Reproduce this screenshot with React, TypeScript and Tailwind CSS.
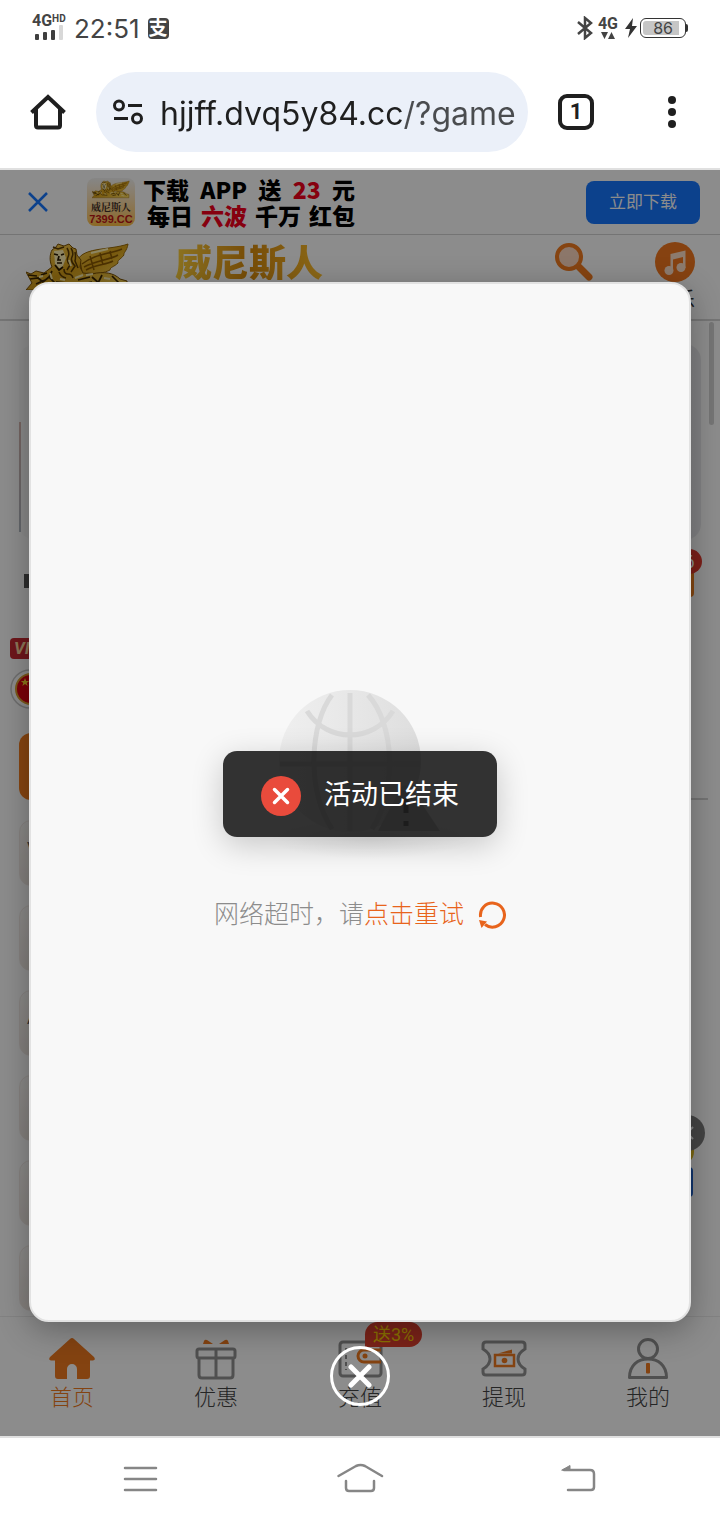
import { useState } from 'react';
import type { ReactNode } from 'react';

const FONT = 'font-[Roboto,"Noto_Sans_CJK_SC",sans-serif]';

const GAME_ROWS = ['V', '', 'A', '', '', ''];

function StatusBar() {
  return (
    <div className="flex h-14 items-center justify-between px-8 text-[#444]">
      <div className="flex items-center">
        <div className="flex w-[34px] flex-col">
          <div className="flex items-start leading-3 font-bold">
            <span className="text-[16px]">4G</span>
            <span className="text-[10px] leading-[8px]">HD</span>
          </div>
          <svg className="h-[14px] w-[34px] overflow-visible" viewBox="0 0 34 14" fill="#3f3f3f">
            <rect x="3" y="7" width="4" height="6" rx="1" />
            <rect x="11" y="5" width="4" height="8" rx="1" />
            <rect x="19" y="3" width="4" height="10" rx="1" />
            <rect x="27" y="-2" width="4" height="15" rx="1" fill="#d8d8d8" />
          </svg>
        </div>
        <span className="ml-2 pt-[2px] font-[Inter,sans-serif] text-[26px] leading-8">22:51</span>
        <span className="ml-2 flex h-[21px] w-[21px] items-center justify-center overflow-hidden rounded bg-[#444] text-[19px] leading-none font-bold text-white">
          支
        </span>
      </div>

      <div className="flex items-center">
        <svg className="h-6 w-4" viewBox="0 0 16 24" fill="none" stroke="#444" strokeWidth="2.500">
          <path d="M1 6l13 11-6 5V2l6 5L1 18" />
        </svg>
        <div className="ml-[5px] flex flex-col items-center">
          <span className="text-[16px] leading-[14px] font-bold">4G</span>
          <svg className="h-[8px] w-[14px]" viewBox="0 0 14 8" fill="#444">
            <path d="M0 1h7l-3.500 7zM7 8h7l-3.500-7z" />
          </svg>
        </div>
        <svg className="ml-[7px] h-5 w-3" viewBox="0 0 12 20" fill="#333">
          <path d="M8 0L0 11h5l-2 9 9-12H7z" />
        </svg>
        <div className="ml-[3px] flex h-5 w-[46px] items-center rounded-[6px] border border-[#333] p-[2px]">
          <div className="flex h-full w-9 items-center justify-end rounded-l-[3px] bg-[#c6c6c6] pr-[6px] font-[Inter,sans-serif] text-[16px] leading-none">
            86
          </div>
        </div>
        <div className="h-2 w-[2px] rounded-r bg-[#333]" />
      </div>
    </div>
  );
}

function BrowserBar() {
  return (
    <div className="flex h-[114px] items-center gap-[30px] border-b-2 border-[#e0e0e0] pl-[30px] text-[#1f1f1f]">
      <button aria-label="Home">
        <svg className="h-9 w-9" viewBox="0 0 36 36" fill="none" stroke="currentColor" strokeWidth="4">
          <path d="M1.500 18.500L18 3l16.500 15.500" />
          <path d="M6 15v16.500a2 2 0 0 0 2 2h20a2 2 0 0 0 2-2V15" />
        </svg>
      </button>
      <div className="flex h-20 min-w-0 flex-1 items-center rounded-full bg-[#ebf0f9] pl-4">
        <svg className="h-8 w-8 shrink-0" viewBox="0 0 32 32" fill="none" stroke="currentColor" strokeWidth="3">
          <circle cx="7" cy="9.500" r="4.500" />
          <path d="M16 9.500h14M2 22.500h14" />
          <circle cx="25" cy="22.500" r="4.500" />
        </svg>
        <input
          aria-label="Address"
          defaultValue="hjjff.dvq5y84.cc/?game"
          className="ml-4 min-w-0 flex-1 bg-[linear-gradient(90deg,#1f1f1f_244px,#4a4c4f_244px)] bg-clip-text pt-1 font-[Inter,sans-serif] text-[32px] leading-10 text-transparent outline-none"
        />
      </div>
      <button className="flex h-9 w-9 items-center justify-center rounded-[9px] border-4 border-[#1f1f1f] text-[22px] leading-none font-bold">
        1
      </button>
      <button aria-label="Menu" className="flex w-24 flex-col items-center gap-1">
        <span className="h-2 w-2 rounded-full bg-[#1f1f1f]" />
        <span className="h-2 w-2 rounded-full bg-[#1f1f1f]" />
        <span className="h-2 w-2 rounded-full bg-[#1f1f1f]" />
      </button>
    </div>
  );
}

function Lion({ className }: { className: string }) {
  return (
    <svg className={className} viewBox="0 0 104 48" fill="none">
      <defs>
        <linearGradient id="gold" x1="0" y1="0" x2="1" y2="1">
          <stop offset="0" stopColor="#ffd65c" />
          <stop offset="0.500" stopColor="#dba31a" />
          <stop offset="1" stopColor="#ffdc5c" />
        </linearGradient>
      </defs>
      <path
        d="M50 22C54 4 82 9 102 2C101 9 97 11 98 13C94 18 91 18 92 21C88 25 84 25 84 28C78 31 72 32 62 31L52 34z"
        fill="url(#gold)"
        stroke="#9a6a08"
        strokeWidth="1"
      />
      <path d="M56 22C68 12 84 12 96 7M58 25C70 18 84 18 92 13M60 28C70 22 80 23 87 19M54 19l2 12M64 14l4 14M74 11l3 12M84 9l2 8" stroke="#8a5a04" strokeWidth="1.500" />
      <path
        d="M0 30l5 2 5-3 8 2 8-6c-3-7-2-13 0-17l4-3 2-3 6 2 5-2 4 4 3 1 1 6 4 5-1 7 3 6 9 1c12-3 22-1 28 5l7 2v9H0l6-7z"
        fill="url(#gold)"
        stroke="#7c5206"
        strokeWidth="1"
      />
      <path d="M28 9l9-1 3 8-3 8-3 3-5-5z" fill="#fff0b4" />
      <path d="M28 12l4 1M35 13l3-1M33 14l-1 4h3M31 21h5M29 23l4 5 4-3" stroke="#2b1a00" strokeWidth="1.700" />
      <path d="M41 6q3 5 1 9t2 8l-3 5M45 6q3 5 1 9t3 9l-4 6M49 10q1 5 0 9l3 7M38 27q0 5 4 5t5 4M33 30q2 5 7 6M27 5l5 2 6-2" stroke="#5c3c04" strokeWidth="1.500" />
      <path d="M4 37l8-1 5 4 6-5M10 42l9-4M26 29l-3 6 6 6M52 38l12-3M66 35l8 7M76 33l-4 8M86 34l8 8M30 40l12 1M56 42l10-2M2 33l9 1M15 33l6-2" stroke="#3b2500" strokeWidth="1.700" />
      <path d="M34 37l5 1M49 36l8-3M60 33l7-1M78 36l6 1M13 35l4-1M43 18l2 6M65 11l17-4M80 41l8 2M24 31l2 6" stroke="#fff3b4" strokeWidth="2" />
    </svg>
  );
}

function DownloadBar() {
  return (
    <div className="flex h-[65px] shrink-0 items-center border-b border-[#d4d4d4] pr-5 pl-7">
      <button aria-label="关闭">
        <svg className="h-5 w-5" viewBox="0 0 20 20" stroke="#1677ff" strokeWidth="2.500">
          <path d="M1 1l18 18M19 1L1 19" />
        </svg>
      </button>
      <div className="ml-[39px] flex h-12 w-12 flex-col items-center overflow-hidden rounded-lg bg-linear-to-b from-[#f4f4f4] to-[#ffc043]">
        <Lion className="h-[22px] w-[38px] shrink-0" />
        <span className="font-['Noto_Serif_CJK_SC','Noto_Sans_CJK_SC',serif] text-[10px] leading-[13px] font-bold text-[#43302a]">威尼斯人</span>
        <span className="font-['Liberation_Sans',sans-serif] text-[11px] leading-[13px] font-bold text-[#c01515]">7399.CC</span>
      </div>
      <div className="ml-2 w-[212px] font-['Noto_Sans_CJK_SC',sans-serif] text-[23px] leading-[26px] font-black text-black">
        <div className="flex justify-between">
          <span>下载</span>
          <span>APP</span>
          <span>送</span>
          <span className="text-[#f5001d]">23</span>
          <span>元</span>
        </div>
        <div className="flex justify-between pl-1">
          <span>每日</span>
          <span className="text-[#f5001d]">六波</span>
          <span>千万</span>
          <span>红包</span>
        </div>
      </div>
      <button className="ml-auto h-[43px] rounded-lg bg-[#1677ff] px-[23px] pt-[2px] text-[17px] text-white">立即下载</button>
    </div>
  );
}

function SiteHeader() {
  return (
    <div className="flex h-[86px] shrink-0 items-start border-b-2 border-[#d6d6d6] pt-[7px] pr-[25px] pl-[26px]">
      <Lion className="h-12 w-[104px]" />
      <h1 className="ml-[45px] bg-linear-to-r from-[#ffd23c] via-[#d98c0c] to-[#ffc02c] bg-clip-text font-['Noto_Sans_CJK_SC',sans-serif] text-[37px] leading-[38px] font-black text-transparent">
        威尼斯人
      </h1>
      <div className="ml-auto flex gap-[61px] text-[20px] leading-7 text-[#333]">
        <button className="flex flex-col items-center">
          <svg className="h-10 w-10" viewBox="0 0 40 40">
            <path d="M25 25l10 10" stroke="#f57c1f" strokeWidth="7" strokeLinecap="round" />
            <circle cx="15" cy="15" r="12" fill="#ffd9c2" stroke="#f57c1f" strokeWidth="4" />
          </svg>
          <span className="mt-1">搜索</span>
        </button>
        <button className="flex flex-col items-center">
          <svg className="h-10 w-10" viewBox="0 0 40 40">
            <circle cx="20" cy="20" r="20" fill="#f5791f" />
            <g fill="#ffe0c8">
              <circle cx="14" cy="28.500" r="4.500" />
              <circle cx="26" cy="25.500" r="4.500" />
              <path d="M15.500 12l15-3.500V26H28V15l-10 2.500V29h-2.500z" />
            </g>
          </svg>
          <span className="mt-1">音乐</span>
        </button>
      </div>
    </div>
  );
}

function PageContent() {
  return (
    <div className="relative min-h-0 flex-1 overflow-hidden px-[19px] pt-[23px]">
      <div className="flex h-[196px] items-end rounded-2xl bg-linear-to-r from-[#fafafa] to-[#ececee] pb-2">
        <div className="h-[110px] w-[2px] bg-linear-to-b from-[#d8b8b0] to-[#b4bcc4]" />
      </div>

      <div className="mt-[34px] flex h-[14px] items-center pl-[5px]">
        <span className="h-[14px] w-5 bg-[#555]" />
      </div>
      <div className="mt-[50px] -ml-[9px] flex flex-col items-start">
        <span className="rounded bg-[#c92a32] px-1 text-[17px] leading-[21px] font-bold text-[#ffd9a0] italic">VIP1</span>
        <svg className="mt-[10px] h-10 w-10" viewBox="0 0 40 40">
          <circle cx="20" cy="20" r="19" fill="#fff" stroke="#c9c9c9" strokeWidth="1.500" />
          <circle cx="21" cy="20" r="15" fill="#e0000f" stroke="#e0a030" strokeWidth="2" />
          <path d="M15 9l1.200 3h3l-2.500 2 1 3-2.700-2-2.700 2 1-3-2.500-2h3z" fill="#ffd52e" />
        </svg>
      </div>
      <div className="mt-6 flex items-end">
        <div className="h-[67px] w-40 rounded-xl bg-[#f57f1f]" />
        <div className="-mr-[7px] flex-1 border-b-2 border-[#d4d4d4]" />
      </div>
      <div className="mt-5 flex flex-col gap-[19px]">
        {GAME_ROWS.map((name, i) => (
          <div
            key={i}
            className="h-[66px] w-40 rounded-xl border border-[#f3ece7] bg-linear-to-b from-[#fcfaf8] to-[#efe8e2] pt-4 pl-[7px] text-[16px] leading-6 text-[#555]"
          >
            {name}
          </div>
        ))}
      </div>

      {/* scroll thumb */}
      <div className="absolute top-px right-[6px] h-[103px] w-[5px] rounded bg-[#d6d6d6]" />
      {/* red packet with its counter */}
      <div className="absolute top-[240px] right-[26px] h-[36px] w-9 rounded bg-[#f08020]" />
      <span className="absolute top-[228px] right-[18px] h-[25px] w-[25px] rounded-full bg-[#e2392f] text-center text-[18px] leading-[25px] text-white">6</span>
      {/* floating promo */}
      <div className="absolute top-[825px] right-[26px] h-[18px] w-10 rounded-b-xl bg-[#e0bb20]" />
      <div className="absolute top-[846px] right-[27px] h-[30px] w-10 rounded bg-[#1f62c8]" />
      <button aria-label="关闭浮窗" className="absolute top-[794px] right-[15px] flex h-9 w-9 items-center justify-center rounded-full bg-[#7d7d7d]">
        <svg className="h-4 w-4" viewBox="0 0 16 16" stroke="#eee" strokeWidth="2">
          <path d="M2 2l12 12M14 2L2 14" />
        </svg>
      </button>
    </div>
  );
}

function HomeIcon() {
  return (
    <svg className="h-11 w-12" viewBox="0 0 48 44" fill="#f07a20">
      <path d="M22 3q2-2 4 0l20 18q2 3-1 3.500h-3V40q0 3-3 3H29V33a5 5 0 0 0-10 0v10H10q-3 0-3-3V24.500H3Q0 24 2 21z" />
    </svg>
  );
}

function GiftIcon() {
  return (
    <svg className="h-11 w-12" viewBox="0 0 48 44" fill="none" stroke="#929292" strokeWidth="3">
      <path d="M11 8l1-3q1-2 3-1l6 4zM37 8l-1-3q-1-2-3-1l-6 4z" fill="#f07a20" stroke="none" />
      <rect x="5" y="13" width="38" height="9" rx="2" />
      <path d="M7 22v17q0 3 3 3h28q3 0 3-3V22M24 13v29" />
    </svg>
  );
}

function WalletIcon() {
  return (
    <svg className="h-11 w-12" viewBox="0 0 48 44" fill="none" stroke="#929292" strokeWidth="3">
      <rect x="4" y="6" width="41" height="34" rx="3" />
      <path d="M10 12v22" strokeWidth="2" strokeDasharray="4 3" />
      <path d="M45 14H28a6 6 0 0 0 0 12h17" stroke="#f07a20" />
      <circle cx="29" cy="20" r="2.500" fill="#f07a20" stroke="none" />
    </svg>
  );
}

function CashIcon() {
  return (
    <svg className="h-11 w-12" viewBox="0 0 48 44" fill="none" stroke="#929292" strokeWidth="3">
      <path d="M6 6h36q3 0 3 3v4q-7 4-7 10t7 10v3q0 3-3 3H6q-3 0-3-3v-3q7-4 7-10T3 13V9q0-3 3-3z" />
      <rect x="15" y="19" width="19" height="11" stroke="#f07a20" strokeWidth="2.500" />
      <circle cx="24.500" cy="24.500" r="2.800" fill="#f07a20" stroke="none" />
      <path d="M18 17.500l14-4v4z" fill="#f07a20" stroke="none" />
    </svg>
  );
}

function UserIcon() {
  return (
    <svg className="h-11 w-12" viewBox="0 0 48 44" fill="none" stroke="#929292" strokeWidth="3">
      <circle cx="24" cy="13" r="9.500" />
      <path d="M5.500 41.500C5.500 29 14 23 24 23s18.500 6 18.500 18.500z" strokeLinejoin="round" />
      <rect x="22" y="27" width="4" height="10.500" rx="1" fill="#f07a20" stroke="none" />
    </svg>
  );
}

const TABS: { label: string; icon: ReactNode; badge?: string }[] = [
  { label: '首页', icon: <HomeIcon /> },
  { label: '优惠', icon: <GiftIcon /> },
  { label: '充值', icon: <WalletIcon />, badge: '送3%' },
  { label: '提现', icon: <CashIcon /> },
  { label: '我的', icon: <UserIcon /> },
];

function TabBar() {
  const [active, setActive] = useState(0);

  return (
    <nav className="flex h-[120px] shrink-0 border-t border-[#ededed] bg-white pt-[19px]">
      {TABS.map((tab, i) => (
        <button
          key={tab.label}
          onClick={() => setActive(i)}
          className={`relative flex flex-1 flex-col items-center text-[22px] leading-9 font-light ${
            active === i ? 'text-[#f07a20]' : 'text-[#444]'
          }`}
        >
          {tab.icon}
          <span>{tab.label}</span>
          {tab.badge && (
            <span className="absolute -top-[14px] left-[77px] rounded-full rounded-bl-none bg-[#e0402f] px-2 text-[18px] leading-[25px] font-normal text-[#ffd000]">
              {tab.badge}
            </span>
          )}
        </button>
      ))}
    </nav>
  );
}

function Globe() {
  return (
    <svg className="h-[190px] w-[220px]" viewBox="0 0 220 190" fill="none">
      <defs>
        <linearGradient id="ball" x1="0" y1="0" x2="1" y2="0">
          <stop offset="0" stopColor="#efefef" />
          <stop offset="0.400" stopColor="#e9e9e9" />
          <stop offset="1" stopColor="#dedede" />
        </linearGradient>
        <radialGradient id="ground">
          <stop offset="0" stopColor="#e6e6e6" />
          <stop offset="1" stopColor="#f8f8f8" />
        </radialGradient>
      </defs>
      <ellipse cx="120" cy="168" rx="100" ry="20" fill="url(#ground)" />
      <circle cx="100" cy="90" r="71" fill="url(#ball)" />
      <g stroke="#d9d9d9" strokeWidth="5">
        <path d="M100 22v138M30 93h140M57 40c20 32 66 32 86 0" />
        <path d="M82 24C60 52 56 118 82 158M118 24c26 28 30 94 4 134" />
      </g>
      <path d="M128 160l22-42q6-8 12 0l28 42z" fill="#d3d3d3" />
      <path d="M156 128v14M156 150v5" stroke="#8a8a8a" strokeWidth="5" />
    </svg>
  );
}

function TimeoutDialog({ onClose }: { onClose: () => void }) {
  return (
    <div className="absolute inset-0 flex flex-col items-center bg-black/45 px-[29px] pt-28 pb-[30px]">
      <div
        role="dialog"
        className="flex w-full flex-1 flex-col items-center justify-center rounded-[20px] border-2 border-[#e2e2e2] bg-[#f8f8f8] shadow-[0_8px_32px_rgba(0,0,0,0.3)]"
      >
        <Globe />
        <div className="mt-9 flex h-9 items-center text-[25px] font-light text-[#8c8c8c]">
          <span>网络超时，请</span>
          <button className="flex items-center gap-[14px] text-[#e8641c]">
            点击重试
            <svg className="h-7 w-7" viewBox="0 0 28 28" fill="none" stroke="currentColor" strokeWidth="3">
              <path d="M2.600 16A12 12 0 1 1 7 23.500" />
              <path d="M1 19l8 1.500L3.500 27z" fill="currentColor" stroke="none" />
            </svg>
          </button>
        </div>
      </div>
      <button
        aria-label="关闭"
        onClick={onClose}
        className="mt-6 flex h-[60px] w-[60px] shrink-0 items-center justify-center rounded-full border-3 border-white"
      >
        <svg className="h-6 w-6" viewBox="0 0 24 24" stroke="#fff" strokeWidth="5" strokeLinecap="round">
          <path d="M3 3l18 18M21 3L3 21" />
        </svg>
      </button>
    </div>
  );
}

function Toast() {
  return (
    <div className="pointer-events-none absolute inset-0 flex items-center justify-center pb-[18px]">
      <div
        role="status"
        className="flex h-[86px] items-center gap-[23px] rounded-[14px] bg-black/80 px-[38px] pt-[3px] text-[27px] text-white shadow-[0_8px_32px_rgba(0,0,0,0.2)]"
      >
        <svg className="h-10 w-10" viewBox="0 0 40 40">
          <circle cx="20" cy="20" r="20" fill="#e94b3c" />
          <path d="M13.500 13.500l13 13M26.500 13.500l-13 13" stroke="#fff" strokeWidth="3.500" strokeLinecap="round" />
        </svg>
        <span>活动已结束</span>
      </div>
    </div>
  );
}

function SystemNav() {
  return (
    <div className="flex h-[84px] items-center justify-around border-t-2 border-[#e0e0e0] px-[31px] text-[#868686]">
      <button aria-label="Recent apps" className="flex flex-1 justify-center">
        <svg className="h-8 w-12" viewBox="0 0 48 32" stroke="currentColor" strokeWidth="2.500" strokeLinecap="round">
          <path d="M8 5h31M8 16h31M8 27h31" />
        </svg>
      </button>
      <button aria-label="Home screen" className="flex flex-1 justify-center">
        <svg className="h-8 w-12" viewBox="0 0 48 32" fill="none" stroke="currentColor" strokeWidth="2.500" strokeLinecap="round">
          <path d="M2.500 13L20 3q4.500-2 9 0l17 10" />
          <path d="M10 18v7q0 3 3 3h22q3 0 3-3v-7" />
        </svg>
      </button>
      <button aria-label="Back" className="flex flex-1 justify-center">
        <svg className="h-8 w-12" viewBox="0 0 48 32" fill="none" stroke="currentColor" strokeWidth="2.500" strokeLinecap="round">
          <path d="M9 7h26q4 0 4 4v13q0 3-3 3H13" />
          <path d="M7 7l8-4.500V7z" fill="currentColor" strokeWidth="1" />
        </svg>
      </button>
    </div>
  );
}

export default function App() {
  const [open, setOpen] = useState(true);

  return (
    <div className={`flex min-h-screen flex-col bg-white ${FONT}`}>
      <StatusBar />
      <BrowserBar />
      <main className="relative flex flex-1 flex-col overflow-hidden">
        <div className="flex h-0 flex-auto flex-col">
          <DownloadBar />
          <SiteHeader />
          <PageContent />
          <TabBar />
        </div>
        {open && <TimeoutDialog onClose={() => setOpen(false)} />}
        {open && <Toast />}
      </main>
      <SystemNav />
    </div>
  );
}
